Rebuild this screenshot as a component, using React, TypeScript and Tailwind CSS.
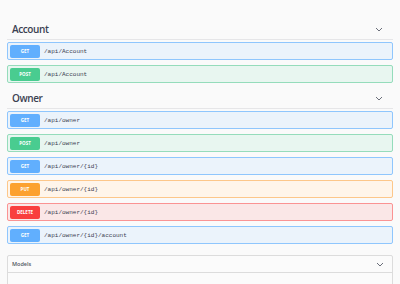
const methods = {
  GET: { row: "bg-[#ebf3fb] border-[#8fc6fd]", badge: "bg-[#61affe]" },
  POST: { row: "bg-[#e8f6f0] border-[#95dcbb]", badge: "bg-[#49cc90]" },
  PUT: { row: "bg-[#fff5ea] border-[#fdc78a]", badge: "bg-[#fca130]" },
  DELETE: { row: "bg-[#fae7e7] border-[#fa9393]", badge: "bg-[#f93e3e]" },
};

type Method = keyof typeof methods;

const sections: { name: string; ops: [Method, string][] }[] = [
  {
    name: "Account",
    ops: [
      ["GET", "/api/Account"],
      ["POST", "/api/Account"],
    ],
  },
  {
    name: "Owner",
    ops: [
      ["GET", "/api/owner"],
      ["POST", "/api/owner"],
      ["GET", "/api/owner/{id}"],
      ["PUT", "/api/owner/{id}"],
      ["DELETE", "/api/owner/{id}"],
      ["GET", "/api/owner/{id}/account"],
    ],
  },
];

function Chevron() {
  return (
    <svg width="8" height="5" viewBox="0 0 8 5" fill="none">
      <path d="M1 1l3 3 3-3" stroke="#6b6f7a" strokeWidth="1" />
    </svg>
  );
}

function Operation({ method, path }: { method: Method; path: string }) {
  const m = methods[method];
  return (
    <div className={`flex items-center h-[18px] mb-[5px] border rounded-[2px] px-[2px] ${m.row}`}>
      <span
        className={`w-[30px] h-[13px] rounded-[2px] flex items-center justify-center text-white text-[4.5px] font-bold font-['Open_Sans',sans-serif] ${m.badge}`}
      >
        {method}
      </span>
      <span className="ml-[4px] text-[6px] text-[#3b4151] font-['Liberation_Mono',monospace]">
        {path}
      </span>
    </div>
  );
}

export default function App() {
  return (
    <div className="w-[400px] h-[284px] overflow-hidden bg-[#fafafa] px-[7px] pt-[19px] font-['Open_Sans',sans-serif]">
      {sections.map((s) => (
        <div key={s.name}>
          <div className="flex items-center justify-between h-[21px] pl-[5px] pr-[10px] border-b border-[#e6e6e8] mb-[2px]">
            <span className="text-[10px] font-semibold text-[#3b4151] tracking-[-0.4px]">{s.name}</span>
            <Chevron />
          </div>
          {s.ops.map(([method, path], i) => (
            <Operation key={i} method={method} path={path} />
          ))}
        </div>
      ))}
      <div className="mt-[11px] border border-[#dcdcdc] rounded-[2px] bg-[#fbfbfb]">
        <div className="flex items-center justify-between h-[17px] pl-[4px] pr-[8px] border-b border-[#dcdcdc]">
          <span className="text-[5.5px] font-semibold text-[#505560]">Models</span>
          <Chevron />
        </div>
        <div className="h-[20px]" />
      </div>
    </div>
  );
}
